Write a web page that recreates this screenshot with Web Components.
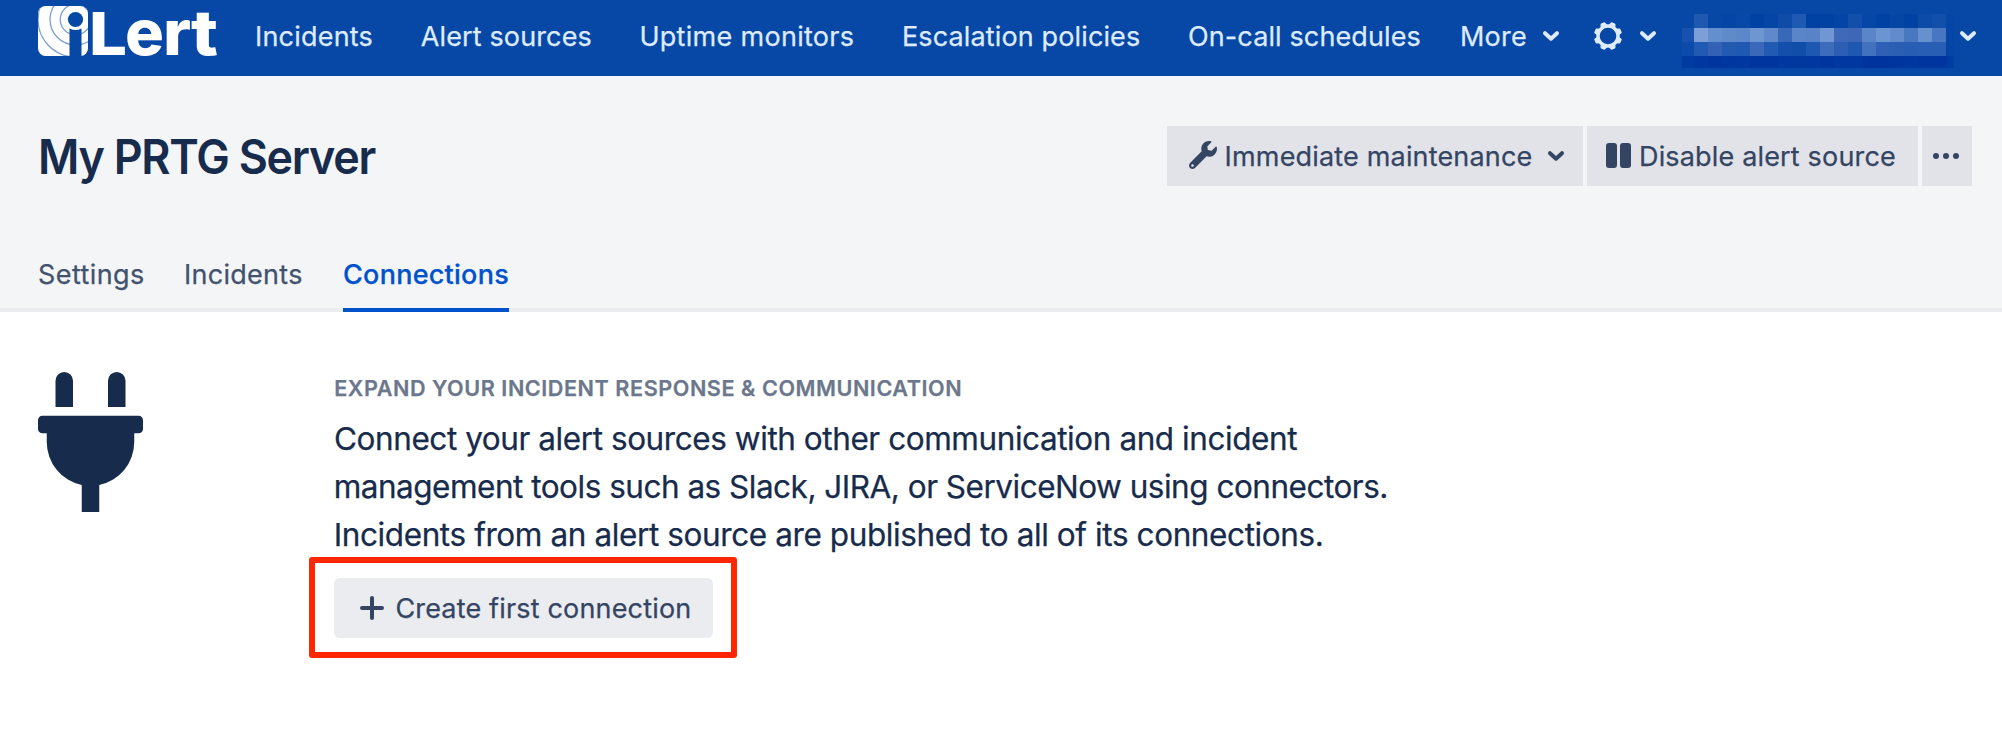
<!DOCTYPE html>
<html lang="en">
<head>
<meta charset="utf-8">
<title>My PRTG Server</title>
<style>
html,body{margin:0;padding:0}
body{width:2002px;height:736px;overflow:hidden;background:#fff;font-family:Inter,"Liberation Sans",sans-serif;font-size:27px;color:#172b4d;-webkit-text-stroke:.25px}
</style>
</head>
<body>
<alert-app></alert-app>
<script>
const define=(name,html,setup)=>{
  const tpl=document.createElement('template');
  tpl.innerHTML=html;
  customElements.define(name,class extends HTMLElement{
    connectedCallback(){
      if(this.shadowRoot)return;
      this.attachShadow({mode:'open'}).append(tpl.content.cloneNode(true));
      if(setup)setup(this,this.shadowRoot);
    }
  });
};

define('icon-chevron',`<style>:host{display:block;width:18px;height:12px}svg{display:block}</style>
<svg width="18" height="12" viewBox="0 0 18 12"><path d="M3 3.2 9 8.7 15 3.2" fill="none" stroke="currentColor" stroke-width="4" stroke-linecap="round" stroke-linejoin="round"/></svg>`);

define('icon-gear',`<style>:host{display:block;width:28px;height:28px}svg{display:block}</style>
<svg width="28" height="28" viewBox="-14 -14 28 28"><circle r="10" fill="none" stroke="currentColor" stroke-width="3.4"/><g fill="currentColor"></g></svg>`,(el,root)=>{
  const g=root.querySelector('g');
  for(let i=0;i<8;i++){
    const p=document.createElementNS('http://www.w3.org/2000/svg','path');
    p.setAttribute('d','M-3.7-10 -2.6-13.4Q-2.4-14.1-1.6-14.1H1.6Q2.4-14.1 2.6-13.4L3.7-10Z');
    p.setAttribute('transform',`rotate(${22.5+45*i})`);
    g.append(p);
  }
});

define('icon-wrench',`<style>:host{display:block;width:28px;height:28px}svg{display:block}</style>
<svg width="28" height="28" viewBox="0 0 512 512"><path fill="currentColor" d="M507.73 109.1c-2.24-9.03-13.54-12.09-20.12-5.51l-74.36 74.36-67.88-11.31-11.31-67.88 74.36-74.36c6.62-6.62 3.43-17.9-5.66-20.16-47.38-11.74-99.55.91-136.58 37.93-39.64 39.64-50.55 97.1-34.05 147.2L18.74 402.76c-24.99 24.99-24.99 65.51 0 90.5 24.99 24.99 65.51 24.99 90.5 0l213.21-213.21c50.12 16.71 107.47 5.68 147.37-34.22 37.07-37.07 49.7-89.32 37.91-136.73zM64 472c-13.25 0-24-10.75-24-24 0-13.26 10.75-24 24-24s24 10.74 24 24c0 13.25-10.75 24-24 24z"/></svg>`);

define('icon-pause',`<style>:host{display:block;width:25px;height:25px}svg{display:block}</style>
<svg width="25" height="25"><g fill="currentColor"><rect x="0" y="0" width="11" height="25" rx="3"/><rect x="14" y="0" width="11" height="25" rx="3"/></g></svg>`);

define('icon-more',`<style>:host{display:block;width:26px;height:6px}svg{display:block}</style>
<svg width="26" height="6"><g fill="currentColor"><circle cx="3" cy="3" r="3"/><circle cx="13" cy="3" r="3"/><circle cx="23" cy="3" r="3"/></g></svg>`);

define('icon-plus',`<style>:host{display:block;width:24px;height:24px}svg{display:block}</style>
<svg width="24" height="24"><path d="M12 2V22M2 12H22" stroke="currentColor" stroke-width="4" stroke-linecap="round"/></svg>`);

define('icon-plug',`<style>:host{display:block;width:105px;height:140px}svg{display:block}</style>
<svg width="105" height="140" viewBox="0 0 384 512"><path fill="currentColor" d="M320,32a32,32,0,0,0-64,0v96h64Zm48,128H16A16,16,0,0,0,0,176v32a16,16,0,0,0,16,16H32v32A160.07,160.07,0,0,0,160,412.8V512h64V412.8A160.07,160.07,0,0,0,352,256V224h16a16,16,0,0,0,16-16V176A16,16,0,0,0,368,160ZM128,32a32,32,0,0,0-64,0v96h64Z"/></svg>`);

define('ilert-logo',`<style>:host{display:block;width:178px;height:50px}svg{display:block;overflow:visible}text{font-family:Inter,sans-serif;font-weight:800;fill:#fff}</style>
<svg width="178" height="50" viewBox="0 0 178 50">
<defs><clipPath id="b"><rect width="50" height="50" rx="7.5"/></clipPath></defs>
<g clip-path="url(#b)">
<rect width="50" height="50" fill="#fff"/>
<g fill="none" stroke="#7f9fd3" stroke-width="1.3"><circle cx="37.5" cy="13.5" r="15.3"/><circle cx="37.5" cy="13.5" r="25.5"/><circle cx="37.5" cy="13.5" r="37.5"/></g>
<circle cx="37.5" cy="13.5" r="10.3" fill="#fff"/>
<path fill="#0747a6" d="M31.5 50V22.5q6 3 12 0V50Z"/>
<circle cx="37.5" cy="13.5" r="9.4" fill="#fff"/>
<circle cx="37.5" cy="13.5" r="7.6" fill="#0747a6"/>
</g>
<text y="49" font-size="59" x="51" textLength="38" lengthAdjust="spacingAndGlyphs">L</text>
<text y="49" font-size="63" x="87" textLength="39" lengthAdjust="spacingAndGlyphs">e</text>
<text y="49" font-size="63" x="125" textLength="28" lengthAdjust="spacingAndGlyphs">r</text>
<text y="49" font-size="63" x="153" textLength="27" lengthAdjust="spacingAndGlyphs">t</text>
</svg>`);

define('redacted-name',`<style>:host{display:grid;width:272px;height:54px;grid-template-columns:12px repeat(18,14px) 8px;grid-template-rows:14px 14px 14px 12px}</style>`,(el,root)=>{
  const rows=[
  '0747a6 1e59b0 0747a6 0545a5 0848a6 0041a4 0445a5 0e4ca8 1e5ab1 0041a4 0041a4 0344a5 124fab 0646a6 0041a4 0546a5 0041a4 0d4ba9 114faa 0445a5',
  '1852ae 7d9fd7 648fce 5f8bcb 5c88ca 6e96d3 5f89cb 3869b8 5a85c8 5982c7 7097d4 4069b9 3e68b7 5a86c9 6b94d2 618bcc 4a78c0 6690ce 4876c0 0545a5',
  '0c4ba9 205ab3 3261b5 225ab2 1f59b1 3b68b9 215ab2 1450ab 114eaa 1d58b1 3d6cba 2c5eb4 1e58b1 4272bf 2e61b5 2a5fb4 275db3 285eb3 295fb3 0545a5',
  '003ba1 0037a0 00349e 00369f 0037a0 00349e 00359f 0037a0 0038a0 0037a0 00349e 0037a0 0037a0 00339d 00339d 00349e 00369f 00349e 00359f 003ba1'];
  for(const c of rows.join(' ').split(' ')){const d=document.createElement('i');d.style.background='#'+c;root.append(d);}
});

define('nav-link',`<style>:host{display:block;white-space:nowrap;line-height:40px;flex:none}</style><slot></slot>`);

define('top-bar',`<style>
:host{display:flex;align-items:center;box-sizing:border-box;height:76px;padding:0 0 4px 38px;background:#0747a6;color:#deebff}
ilert-logo{margin:-10px 39px 0 0;flex:none}
nav{display:flex;align-items:center;padding-top:1px}
nav-link:nth-child(1){width:166.8px;letter-spacing:.2px}
nav-link:nth-child(2){width:217.6px;letter-spacing:.124px}
nav-link:nth-child(3){width:262.6px;letter-spacing:.3px}
nav-link:nth-child(4){width:286px;letter-spacing:.131px}
nav-link:nth-child(5){width:272px;letter-spacing:.12px}
nav-link:nth-child(6){width:82px;letter-spacing:.235px}
nav-link:nth-child(2){text-indent:-1px}
icon-gear{margin-left:34px}
.g{margin-left:17px}
redacted-name{margin:10px 5px 0 25px}
</style>
<ilert-logo></ilert-logo>
<nav><nav-link>Incidents</nav-link><nav-link>Alert sources</nav-link><nav-link>Uptime monitors</nav-link><nav-link>Escalation policies</nav-link><nav-link>On-call schedules</nav-link><nav-link>More</nav-link></nav>
<icon-chevron></icon-chevron><icon-gear></icon-gear><icon-chevron class="g"></icon-chevron><redacted-name></redacted-name><icon-chevron></icon-chevron>`);

define('tool-button',`<style>
:host{display:flex;align-items:center;box-sizing:border-box;height:60px;background:#e2e3e9;color:#344563;white-space:nowrap;line-height:40px;flex:none}
.label{display:block;padding-top:1px}
</style><slot name="icon"></slot><span class="label"><slot></slot></span><slot name="end"></slot>`);

define('page-tab',`<style>
:host{display:block;box-sizing:border-box;height:58px;line-height:40px;padding-top:1px;white-space:nowrap;color:#42526e}
:host([active]){color:#0052cc;font-weight:500;border-bottom:4px solid #0052cc}
</style><slot></slot>`);

define('page-header',`<style>
:host{display:flex;flex-direction:column;box-sizing:border-box;height:236px;background:#f4f5f7;padding:50px 30px 0 38px}
.row{display:flex;align-items:center;gap:4px;height:60px}
h1{margin:1px auto 0 -.5px;font-size:47.5px;line-height:60px;font-weight:600;letter-spacing:-1.3px;transform:scaleX(.943);transform-origin:0 50%;white-space:nowrap;color:#172b4d;-webkit-text-stroke:0}
.m{width:416px;padding-left:22px;letter-spacing:.17px}
.d{width:331px;padding-left:19px;letter-spacing:.166px}
.o{width:50px;justify-content:center;padding-right:2px}
icon-wrench{margin:0 7.6px 3px 0}
icon-pause{margin:0 8px 1px 0}
.m icon-chevron{margin:0 0 1px 14.5px}
.tabs{display:flex;margin:68px -30px 0 -38px;padding-left:38px;box-shadow:inset 0 -4px #ebecf0;height:58px}
page-tab:nth-child(1){width:146px;letter-spacing:.411px}
page-tab:nth-child(2){width:159px;letter-spacing:.28px}
page-tab:nth-child(3){width:166px;letter-spacing:.262px}
</style>
<div class="row"><h1>My PRTG Server</h1>
<tool-button class="m"><icon-wrench slot="icon"></icon-wrench>Immediate maintenance<icon-chevron slot="end"></icon-chevron></tool-button>
<tool-button class="d"><icon-pause slot="icon"></icon-pause>Disable alert source</tool-button>
<tool-button class="o"><icon-more slot="icon"></icon-more></tool-button></div>
<div class="tabs"><page-tab>Settings</page-tab><page-tab>Incidents</page-tab><page-tab active>Connections</page-tab></div>`);

define('empty-state',`<style>
:host{display:flex;align-items:flex-start;padding:60px 0 0 38px;color:#172b4d}
icon-plug{flex:none;margin-right:190.7px}
h2{margin:1px 0 0 .5px;font-size:21.6px;line-height:30px;font-weight:600;letter-spacing:.555px;color:#6b778c;white-space:nowrap}
p{margin:12px 0 0;font-size:31.5px;line-height:48px;white-space:nowrap}
p span{display:block}
.a{letter-spacing:-.431px;margin-left:.3px}.b{letter-spacing:-.496px}.c{letter-spacing:-.398px}
.wrap{position:relative;width:379px;margin:19px 0 0 .3px}
.wrap::after{content:"";position:absolute;left:-25px;top:-21px;width:428px;height:101px;box-sizing:border-box;border:6px solid #ff2600;border-radius:3px}
tool-button{width:379px;background:#ebecf0;border-radius:6px;padding-left:26px;letter-spacing:.17px}
icon-plus{margin-right:11.4px}
</style>
<icon-plug></icon-plug>
<section><h2>EXPAND YOUR INCIDENT RESPONSE &amp; COMMUNICATION</h2>
<p><span class="a">Connect your alert sources with other communication and incident</span><span class="b">management tools such as Slack, JIRA, or ServiceNow using connectors.</span><span class="c">Incidents from an alert source are published to all of its connections.</span></p>
<div class="wrap"><tool-button><icon-plus slot="icon"></icon-plus>Create first connection</tool-button></div></section>`);

define('alert-app',`<style>:host{display:block}</style><top-bar></top-bar><page-header></page-header><empty-state></empty-state>`);
</script>
</body>
</html>
